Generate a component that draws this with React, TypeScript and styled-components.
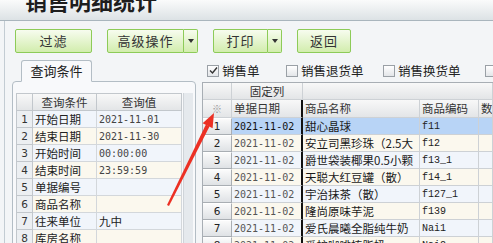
import React from 'react'
import styled, { createGlobalStyle } from 'styled-components'

const GlobalStyle = createGlobalStyle`
    html, body {
        margin: 0;
        padding: 0;
    }
    body {
        font-family: "Noto Sans CJK SC", "DejaVu Sans", sans-serif;
        font-size: 12px;
        color: #222;
    }
`

const Page = styled.div`
    position: relative;
    width: 493px;
    height: 243px;
    overflow: hidden;
    background: #f3f5f7;
`

const TitleBar = styled.div`
    box-sizing: border-box;
    height: 21px;
    overflow: hidden;
    padding-left: 25px;
    border-bottom: 1px solid #a9b5bd;
    background: linear-gradient(#fafbfb, #dce2e5);
`

const Title = styled.h1`
    margin: -11px 0 0;
    font-size: 22px;
    line-height: 22px;
    font-weight: 700;
    color: #1e1e1e;
`

const Body = styled.div`
    margin-left: 4px;
    border-left: 1px solid #c3ccd3;
    height: 222px;
`

const Toolbar = styled.div`
    display: flex;
    gap: 15px;
    padding: 8px 0 0 10px;
`

const Button = styled.button<{ $w: number }>`
    box-sizing: border-box;
    width: ${({ $w }) => $w}px;
    height: 24px;
    padding: 0;
    border: 1px solid #8dcb58;
    border-radius: 2px;
    background: linear-gradient(#f7fcef, #d2edad);
    font-family: inherit;
    font-size: 13px;
    line-height: 16px;
    color: #333;
    letter-spacing: 1px;
`

const Split = styled.div`
    display: flex;
    ${Button} {
        border-radius: 2px 0 0 2px;
    }
`

const Drop = styled.div`
    box-sizing: border-box;
    width: 14px;
    height: 24px;
    display: flex;
    align-items: center;
    justify-content: center;
    border: 1px solid #8dcb58;
    border-left: none;
    border-radius: 0 2px 2px 0;
    background: linear-gradient(#f7fcef, #d2edad);
    &::after {
        content: "";
        border-top: 4px solid #333;
        border-left: 3.5px solid transparent;
        border-right: 3.5px solid transparent;
    }
`

const Main = styled.div`
    display: flex;
    margin-top: 6px;
    padding-left: 7px;
`

const LeftCol = styled.div`
    width: 184px;
    flex: none;
`

const Tab = styled.div`
    position: relative;
    z-index: 1;
    box-sizing: border-box;
    width: 71px;
    height: 22px;
    margin: 1px 0 -1px 9px;
    border: 1px solid #b3bdc5;
    border-bottom: 1px solid #f8f9fb;
    border-radius: 3px 3px 0 0;
    background: #f8f9fb;
    font-size: 13px;
    line-height: 20px;
    text-align: center;
    color: #222;
`

const Panel = styled.div`
    display: flex;
    height: 170px;
    padding: 11px 2px 0 3px;
    border: 1px solid #b3bdc5;
    border-radius: 4px 4px 0 0;
    background: #f8f9fb;
`

const QueryGrid = styled.div`
    display: grid;
    grid-template-columns: 16px 64px 85px;
    grid-auto-rows: 17px;
    border-top: 1px solid #c2c7cc;
    border-left: 1px solid #c2c7cc;
    align-self: flex-start;
    line-height: 15px;
`

const HeadCell = styled.div`
    box-sizing: border-box;
    display: flex;
    align-items: center;
    justify-content: center;
    padding: 0 2px;
    border-right: 1px solid #c2c7cc;
    border-bottom: 1px solid #c2c7cc;
    background: linear-gradient(#f8f8f8, #e3e5e7);
    font-size: 11.5px;
    color: #333;
    white-space: nowrap;
    overflow: hidden;
`

const NumCell = styled.div`
    box-sizing: border-box;
    display: flex;
    align-items: center;
    justify-content: center;
    border-right: 1px solid #c2c7cc;
    border-bottom: 1px solid #c2c7cc;
    background: #eceff2;
    font-family: "DejaVu Sans", sans-serif;
    font-size: 10.5px;
    color: #333;
`

const DataCell = styled.div<{ $even: boolean; $mono?: boolean }>`
    box-sizing: border-box;
    display: flex;
    align-items: center;
    padding: 0 2px;
    border-right: 1px solid #d3d7db;
    border-bottom: 1px solid #d3d7db;
    background: ${({ $even }) => ($even ? '#fbf8ee' : '#f1f5fb')};
    font-family: ${({ $mono }) =>
        $mono ? '"DejaVu Sans Mono", monospace' : '"Noto Sans CJK SC", sans-serif'};
    font-size: ${({ $mono }) => ($mono ? '10px' : '11.5px')};
    color: ${({ $mono }) => ($mono ? '#444' : '#222')};
    white-space: nowrap;
    overflow: hidden;
`

const ScrollTrack = styled.div`
    width: 12px;
    margin-left: 1px;
    background: #e5e9ed;
    border-left: 1px solid #cfd4d9;
`

const RightCol = styled.div`
    flex: 1;
    margin-left: 6px;
    min-width: 0;
`

const CheckRow = styled.div`
    display: flex;
    align-items: center;
    height: 23px;
    padding-left: 5px;
    white-space: nowrap;
`

const CheckItem = styled.label<{ $w: number }>`
    display: flex;
    align-items: center;
    gap: 3px;
    width: ${({ $w }) => $w}px;
    flex: none;
    font-size: 12.5px;
    line-height: 15px;
    color: #222;
`

const Box = styled.span<{ $checked?: boolean }>`
    box-sizing: border-box;
    width: 12px;
    height: 12px;
    flex: none;
    display: flex;
    align-items: center;
    justify-content: center;
    border: 1px solid #9aa0a6;
    background: linear-gradient(#ffffff, #e3e6e9);
    svg {
        display: ${({ $checked }) => ($checked ? 'block' : 'none')};
    }
`

const Grid = styled.div`
    border-top: 1px solid #a8aeb4;
    border-left: 1px solid #a8aeb4;
    line-height: 15px;
`

const Row = styled.div<{ $h?: number }>`
    display: flex;
    height: ${({ $h }) => $h || 17}px;
`

const Cell = styled.div<{ $w?: number; $fixed?: boolean; $head?: boolean; $bg?: string; $center?: boolean }>`
    box-sizing: border-box;
    ${({ $w }) => ($w ? `width: ${$w}px; flex: none;` : 'flex: 1;')}
    display: flex;
    align-items: center;
    justify-content: ${({ $center }) => ($center ? 'center' : 'flex-start')};
    padding: 0 2px;
    border-right: ${({ $fixed }) => ($fixed ? '2px solid #111' : '1px solid #cdd1d5')};
    border-bottom: 1px solid #cdd1d5;
    background: ${({ $head, $bg }) => ($head ? 'linear-gradient(#f8f8f8, #e3e5e7)' : $bg)};
    font-size: 11.5px;
    color: ${({ $head }) => ($head ? '#333' : '#1a1a1a')};
    white-space: nowrap;
    overflow: hidden;
`

const Star = styled.span`
    font-size: 10px;
    color: #999;
`

const RowNum = styled.div`
    box-sizing: border-box;
    width: 29px;
    flex: none;
    display: flex;
    align-items: center;
    justify-content: center;
    border-top: 1px solid #fff;
    border-right: 1px solid #a9aeb3;
    border-bottom: 1px solid #a9aeb3;
    background: linear-gradient(#fbfbfb, #dfe2e5);
    font-family: "DejaVu Sans", sans-serif;
    font-size: 10.5px;
    color: #222;
`

const DateText = styled.span<{ $sel: boolean }>`
    font-family: "DejaVu Sans Mono", monospace;
    font-size: 10px;
    color: ${({ $sel }) => ($sel ? '#111' : '#555')};
`

const CodeText = styled.span`
    font-family: "Liberation Mono", monospace;
    font-size: 10px;
    color: #222;
`

const Arrow = styled.svg`
    position: absolute;
    left: 0;
    top: 0;
    pointer-events: none;
`

const queryRows: [string, string][] = [
    ['开始日期', '2021-11-01'],
    ['结束日期', '2021-11-30'],
    ['开始时间', '00:00:00'],
    ['结束时间', '23:59:59'],
    ['单据编号', ''],
    ['商品名称', ''],
    ['往来单位', '九中'],
    ['库房名称', ''],
]

const saleRows: [string, string][] = [
    ['甜心晶球', 'f11'],
    ['安立司黑珍珠（2.5大', 'f12'],
    ['爵世袋装椰果0.5小颗', 'f13_1'],
    ['天聪大红豆罐（散）', 'f14_1'],
    ['宇治抹茶（散）', 'f127_1'],
    ['隆尚原味芋泥', 'f139'],
    ['爱氏晨曦全脂纯牛奶', 'Nai1'],
    ['爱护咖啡植脂奶', 'Nai2'],
]

const Check = ({ label, w, checked }: { label: string; w: number; checked?: boolean }) => (
    <CheckItem $w={w}>
        <Box $checked={checked}>
            <svg width="9" height="9" viewBox="0 0 9 9">
                <path d="M1 4.5 L3.5 7 L8 1.5" fill="none" stroke="#333" strokeWidth="1.4" />
            </svg>
        </Box>
        {label}
    </CheckItem>
)

const App = () => {
    return (
        <Page>
            <GlobalStyle />
            <TitleBar>
                <Title>销售明细统计</Title>
            </TitleBar>
            <Body>
                <Toolbar>
                    <Button $w={77}>过滤</Button>
                    <Split>
                        <Button $w={77}>高级操作</Button>
                        <Drop />
                    </Split>
                    <Split>
                        <Button $w={55}>打印</Button>
                        <Drop />
                    </Split>
                    <Button $w={54}>返回</Button>
                </Toolbar>
                <Main>
                    <LeftCol>
                        <Tab>查询条件</Tab>
                        <Panel>
                            <QueryGrid>
                                <HeadCell />
                                <HeadCell>查询条件</HeadCell>
                                <HeadCell>查询值</HeadCell>
                                {queryRows.map(([name, value], i) => {
                                    const mono = /^[\d:-]+$/.test(value)
                                    return (
                                        <React.Fragment key={name}>
                                            <NumCell>{i + 1}</NumCell>
                                            <DataCell $even={i % 2 === 1}>{name}</DataCell>
                                            <DataCell $even={i % 2 === 1} $mono={mono}>{value}</DataCell>
                                        </React.Fragment>
                                    )
                                })}
                            </QueryGrid>
                            <ScrollTrack />
                        </Panel>
                    </LeftCol>
                    <RightCol>
                        <CheckRow>
                            <Check label="销售单" w={79} checked />
                            <Check label="销售退货单" w={97} />
                            <Check label="销售换货单" w={102} />
                            <Check label="" w={20} />
                        </CheckRow>
                        <Grid>
                            <Row>
                                <Cell $w={29} $head />
                                <Cell $w={71} $head $center>固定列</Cell>
                                <Cell $head />
                            </Row>
                            <Row $h={18}>
                                <Cell $w={29} $head $center>
                                    <Star>※</Star>
                                </Cell>
                                <Cell $w={71} $head $fixed>单据日期</Cell>
                                <Cell $w={117} $head>商品名称</Cell>
                                <Cell $w={59} $head>商品编码</Cell>
                                <Cell $head>数</Cell>
                            </Row>
                            {saleRows.map(([name, code], i) => {
                                const sel = i === 0
                                const bg = sel ? '#b8d4f6' : i % 2 === 1 ? '#fbf8ee' : '#f1f5fb'
                                return (
                                    <Row key={code}>
                                        <RowNum>{i + 1}</RowNum>
                                        <Cell $w={71} $fixed $bg={bg}>
                                            <DateText $sel={sel}>2021-11-02</DateText>
                                        </Cell>
                                        <Cell $w={117} $bg={bg}>{name}</Cell>
                                        <Cell $w={59} $bg={bg}>
                                            <CodeText>{code}</CodeText>
                                        </Cell>
                                        <Cell $bg={bg} />
                                    </Row>
                                )
                            })}
                        </Grid>
                    </RightCol>
                </Main>
            </Body>
            <Arrow width="493" height="243" viewBox="0 0 493 243">
                <polygon points="167,205 169,206 209.5,126.4 205.9,124.6" fill="#ec3024" />
                <polygon points="214,113 212.6,128.3 202.6,123.3" fill="#ec3024" />
            </Arrow>
        </Page>
    )
}

export default App
